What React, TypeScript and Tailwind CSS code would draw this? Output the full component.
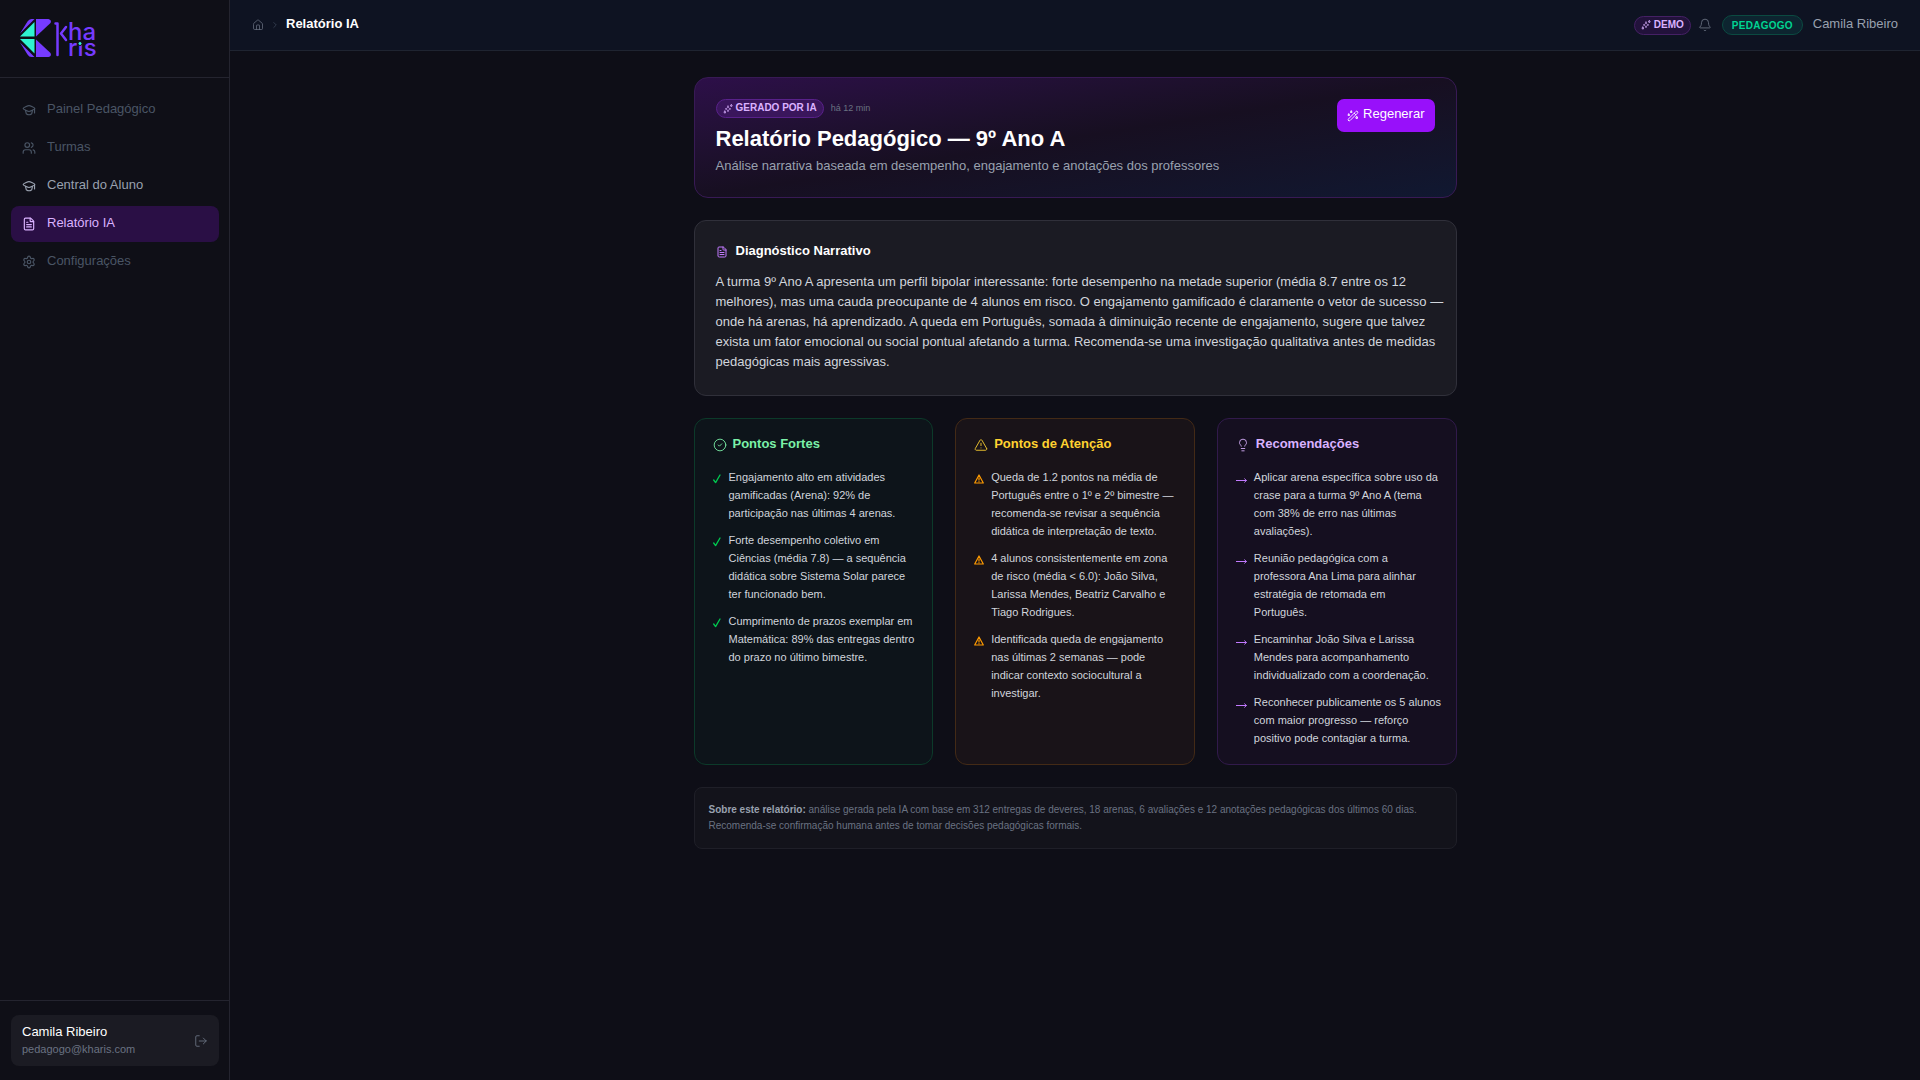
import type { ReactNode } from 'react';
import { Bell, ChevronRight, CircleCheck, FileText, House, Lightbulb, LogOut, Settings, TriangleAlert, Users } from 'lucide-react';
import clsx from 'clsx';

type IconProps = { className?: string };

const navItems = [
  { label: 'Painel Pedagógico', icon: GraduationIcon, state: 'muted' },
  { label: 'Turmas', icon: Users, state: 'muted' },
  { label: 'Central do Aluno', icon: GraduationIcon, state: 'normal' },
  { label: 'Relatório IA', icon: FileText, state: 'active' },
  { label: 'Configurações', icon: Settings, state: 'muted' },
];

const strengths = [
  'Engajamento alto em atividades gamificadas (Arena): 92% de participação nas últimas 4 arenas.',
  'Forte desempenho coletivo em Ciências (média 7.8) — a sequência didática sobre Sistema Solar parece ter funcionado bem.',
  'Cumprimento de prazos exemplar em Matemática: 89% das entregas dentro do prazo no último bimestre.',
];

const warnings = [
  'Queda de 1.2 pontos na média de Português entre o 1º e 2º bimestre — recomenda-se revisar a sequência didática de interpretação de texto.',
  '4 alunos consistentemente em zona de risco (média < 6.0): João Silva, Larissa Mendes, Beatriz Carvalho e Tiago Rodrigues.',
  'Identificada queda de engajamento nas últimas 2 semanas — pode indicar contexto sociocultural a investigar.',
];

const recommendations = [
  'Aplicar arena específica sobre uso da crase para a turma 9º Ano A (tema com 38% de erro nas últimas avaliações).',
  'Reunião pedagógica com a professora Ana Lima para alinhar estratégia de retomada em Português.',
  'Encaminhar João Silva e Larissa Mendes para acompanhamento individualizado com a coordenação.',
  'Reconhecer publicamente os 5 alunos com maior progresso — reforço positivo pode contagiar a turma.',
];

function GraduationIcon({ className }: IconProps) {
  return (
    <svg viewBox="0 0 24 24" fill="none" stroke="currentColor" strokeWidth="2" strokeLinecap="round" strokeLinejoin="round" className={className} aria-hidden="true">
      <path d="M2 9.500C2 8.200 10.100 4.500 12 4.500s10 3.700 10 5-8.100 5-10 5-10-3.700-10-5Z" />
      <path d="m6 12.500 1.200 5.100c.1.500.3.900.7 1.100 2.400 1.700 5.900 1.700 8.200 0 .4-.2.6-.6.7-1.100l1.200-5.100" />
      <path d="M21.500 10v7" />
    </svg>
  );
}

function SparklesIcon({ className }: IconProps) {
  return (
    <svg viewBox="0 0 24 24" fill="none" stroke="currentColor" strokeWidth="1.75" strokeLinecap="round" strokeLinejoin="round" className={className} aria-hidden="true">
      <path d="m12 5 1.300 3.500c.5 1.300.7 1.500 2 2l3.200 1.300-3.200 1.200c-1.300.5-1.500.7-2 2L12 18.500 10.700 15c-.5-1.300-.7-1.500-2-2l-3.200-1.200 3.200-1.300c1.300-.5 1.500-.7 2-2L12 5Z" />
      <path d="m20 1.500.6 1.900 1.900.6-1.900.6-.6 1.900-.6-1.900-1.900-.6 1.900-.6.6-1.900Z" />
      <path d="m4.500 17 .7 2 2 .7-2 .7-.7 2-.7-2-2-.7 2-.7.7-2Z" />
    </svg>
  );
}

function WandIcon({ className }: IconProps) {
  return (
    <svg viewBox="0 0 24 24" fill="none" stroke="currentColor" strokeWidth="1.75" strokeLinecap="round" strokeLinejoin="round" className={className} aria-hidden="true">
      <path d="M3 21c-.9-.9-.9-2.300 0-3.200L17.800 3c.9-.9 2.300-.9 3.200 0s.9 2.300 0 3.200L6.200 21c-.9.9-2.300.9-3.200 0Z" />
      <path d="m14.500 6.500 3 3" />
      <path d="m8.500 2 .6 1.500 1.400.5-1.400.6L8.500 6 8 4.600 6.500 4 8 3.500 8.500 2ZM3.500 8l.5 1.500 1.500.5-1.500.6-.5 1.400-.5-1.400L1.500 10l1.500-.5L3.500 8ZM19.500 13l.6 1.900 1.900.6-1.900.7-.6 1.800-.7-1.800-1.800-.7 1.800-.6.7-1.900Z" />
    </svg>
  );
}

function CheckMarker() {
  return (
    <svg width="9" height="10" viewBox="0 0 9 10" fill="none" stroke="currentColor" strokeWidth="1.3" strokeLinecap="round" strokeLinejoin="round" aria-hidden="true">
      <path d="M.7 6 2.600 8.600 7 1" />
    </svg>
  );
}

function WarningMarker() {
  return (
    <svg width="10" height="10" viewBox="0 0 10 10" fill="none" stroke="currentColor" strokeWidth="1.200" strokeLinejoin="round" aria-hidden="true">
      <path d="M5 1 9.300 9H.7L5 1Z" />
      <path d="M5 3.500v3M5 7.300v1" />
    </svg>
  );
}

function ArrowMarker() {
  return (
    <svg width="11" height="10" viewBox="0 0 11 10" fill="none" stroke="currentColor" aria-hidden="true">
      <path d="M0 6.500h10.500" />
      <path d="M8.300 4.500 10.500 6.500 8.300 8.500" strokeWidth=".9" />
    </svg>
  );
}

function Logo() {
  return (
    <svg width="79" height="38" viewBox="0 0 79 38" role="img" aria-label="Kharis" className="overflow-visible">
      <g fill="#763bff">
        <path d="M1 14.500 8.500 2.500Q10 0 12.500 0H15.500Z" />
        <path d="M1 23.500 8.500 35.500Q10 38 12.500 38H15.500Z" />
        <path d="M17 0H29.500Q33 1 31.500 4L17 17.500Z" />
        <path d="M17 20.500 31.500 34Q33 37 29.500 38H17Z" />
      </g>
      <g fill="#2ff3d0">
        <path d="M1 17.500 15.500 3V17.500Z" />
        <path d="M1 20H15.500V34.500Z" />
      </g>
      {/* Tall stem and arm of the "k" */}
      <path d="M36.500 4.500H38.500V36M47 8 42 14.500 47 21" fill="none" stroke="#763bff" strokeWidth="2.500" strokeLinecap="round" strokeLinejoin="round" />
      <g fill="#763bff" fontFamily="Inter, sans-serif" fontSize="24" fontWeight="500">
        <text x="49" y="21">ha</text>
        <text x="49" y="37">rıs</text>
      </g>
      <circle cx="61" cy="24.500" r="2" fill="#2ff3d0" stroke="#0f0f17" />
    </svg>
  );
}

function Sidebar() {
  return (
    <aside className="w-[230px] shrink-0 flex flex-col border-r border-[#24242f] bg-[#0f0f17]">
      <div className="px-[19px] pt-[19px] pb-5 border-b border-[#24242f]">
        <Logo />
      </div>
      <nav className="flex-1 pl-[11px] pr-2.5 py-[14px] space-y-0.5">
        {navItems.map(({ label, icon: Icon, state }) => (
          <a
            key={label}
            href="#"
            className={clsx(
              'flex items-center gap-[11px] h-9 px-[11px] rounded-lg text-[13px]',
              state === 'muted' && 'text-[#4a5565]',
              state === 'normal' && 'text-[#99a1af]',
              state === 'active' && 'bg-[#2a0f45] text-[#dab2ff]'
            )}
          >
            <Icon className="size-[14px]" />
            <span className="pb-0.5">{label}</span>
          </a>
        ))}
      </nav>
      <div className="pl-[11px] pr-2.5 py-[14px] border-t border-[#24242f]">
        <div className="flex items-center justify-between px-[11px] py-2 rounded-lg bg-[#1b1b23]">
          <div>
            <p className="text-[13px] leading-[18px] font-medium text-white">Camila Ribeiro</p>
            <p className="text-[11px] leading-[17px] text-[#6a7282]">pedagogo@kharis.com</p>
          </div>
          <button type="button" aria-label="Sair" className="text-[#6a7282]">
            <LogOut className="size-[14px]" strokeWidth={1.5} />
          </button>
        </div>
      </div>
    </aside>
  );
}

function Header() {
  return (
    <header className="flex items-center justify-between h-[51px] px-[22px] border-b border-[#1f2431] bg-[#0e1322] text-[13px]">
      <div className="flex items-center gap-1.5">
        <a href="#" aria-label="Início" className="text-[#6a7282]">
          <House className="size-3" strokeWidth={1.5} />
        </a>
        <ChevronRight className="size-[10px] text-[#364153]" />
        <span className="pb-0.5 font-semibold text-white">Relatório IA</span>
      </div>
      <div className="flex items-center">
        <span className="flex items-center gap-[3px] h-[19px] px-1.5 rounded-full border border-[#452065] bg-[#22123b] text-[10px] font-bold text-[#dab2ff]">
          <SparklesIcon className="size-[10px]" />
          <span className="pb-0.5">DEMO</span>
        </span>
        <button type="button" aria-label="Notificações" className="ml-[7px] text-[#6a7282]">
          <Bell className="size-[14px]" strokeWidth={1.5} />
        </button>
        <span className="flex items-center h-5 ml-[10px] px-[9px] rounded-full border border-[#0b4a41] bg-[#0d2530] text-[10px] font-bold tracking-wide text-[#00d492]">
          PEDAGOGO
        </span>
        <span className="ml-[10px] pb-0.5 text-[#99a1af]">Camila Ribeiro</span>
      </div>
    </header>
  );
}

type InsightCardProps = {
  title: string;
  icon: ReactNode;
  marker: ReactNode;
  items: string[];
  cardClass: string;
  titleClass: string;
  markerClass: string;
};

function InsightCard({ title, icon, marker, items, cardClass, titleClass, markerClass }: InsightCardProps) {
  return (
    <section className={clsx('rounded-xl border pl-[18px] pr-[14px] pt-4 pb-[17px]', cardClass)}>
      <h3 className={clsx('flex items-center gap-[6px] mb-[15px] text-[13px] leading-[18px] font-semibold', titleClass)}>
        {icon}
        {title}
      </h3>
      <ul className="space-y-[9px] text-[11px] leading-[18px] text-[#d1d5dc]">
        {items.map((item) => (
          <li key={item} className="flex gap-[7px]">
            <span className={clsx('pt-1.5 shrink-0', markerClass)}>{marker}</span>
            <span>{item}</span>
          </li>
        ))}
      </ul>
    </section>
  );
}

export default function App() {
  return (
    <div className="min-h-screen flex bg-[#0e0e17] font-['Liberation_Sans',Arial,sans-serif] text-white">
      <Sidebar />
      <div className="flex-1 min-w-0 flex flex-col">
        <Header />
        <main className="w-full max-w-[807px] mx-auto px-[22px] py-[26px] space-y-[22px]">
          {/* Report heading */}
          <section className="flex items-start justify-between p-[21px] rounded-[14px] border border-[#381a55] bg-linear-to-br from-[#2d0f49] via-[#170f21] to-[#101831]">
            <div>
              <div className="flex items-center gap-[7px]">
                <span className="flex items-center gap-[3px] h-[19px] px-1.5 rounded-full border border-[#59218a] bg-[#3a165c] text-[10px] font-bold text-[#dab2ff]">
                  <SparklesIcon className="size-[10px]" />
                  <span className="pb-0.5">GERADO POR IA</span>
                </span>
                <span className="text-[9px] text-[#6a7282]">há 12 min</span>
              </div>
              <h1 className="mt-[7px] text-[22px] leading-7 font-bold">Relatório Pedagógico — 9º Ano A</h1>
              <p className="mt-1 mb-px text-[13px] leading-[18px] text-[#99a1af]">
                Análise narrativa baseada em desempenho, engajamento e anotações dos professores
              </p>
            </div>
            <button type="button" className="flex items-center gap-1 h-[33px] px-[10px] rounded-[7px] bg-[#9810fa] text-[13px] font-medium">
              <WandIcon className="size-3" />
              <span className="pb-[3px]">Regenerar</span>
            </button>
          </section>

          {/* Narrative */}
          <section className="py-[21px] pl-[21px] pr-[10px] rounded-xl border border-[#30303a] bg-[#1b1b23]">
            <h2 className="flex items-center gap-2 mb-3 text-[13px] leading-[18px] font-semibold">
              <FileText className="size-3 mt-0.5 text-[#c27aff]" />
              Diagnóstico Narrativo
            </h2>
            <p className="mb-0.5 text-[13px] leading-5 text-[#d1d5dc]">
              A turma 9º Ano A apresenta um perfil bipolar interessante: forte desempenho na metade superior (média 8.7 entre os 12
              melhores), mas uma cauda preocupante de 4 alunos em risco. O engajamento gamificado é claramente o vetor de sucesso —
              onde há arenas, há aprendizado. A queda em Português, somada à diminuição recente de engajamento, sugere que talvez
              exista um fator emocional ou social pontual afetando a turma. Recomenda-se uma investigação qualitativa antes de medidas
              pedagógicas mais agressivas.
            </p>
          </section>

          {/* Insights */}
          <div className="grid grid-cols-1 md:grid-cols-3 gap-[22px]">
            <InsightCard
              title="Pontos Fortes"
              icon={<CircleCheck className="size-[14px] mt-0.5" strokeWidth={1.5} />}
              marker={<CheckMarker />}
              items={strengths}
              cardClass="border-[#0c3a2a] bg-[#0d141a]"
              titleClass="text-[#7bf1a8]"
              markerClass="text-[#00c950]"
            />
            <InsightCard
              title="Pontos de Atenção"
              icon={<TriangleAlert className="size-[14px] mt-0.5" strokeWidth={1.5} />}
              marker={<WarningMarker />}
              items={warnings}
              cardClass="border-[#432a16] bg-[#191318]"
              titleClass="text-[#ffd230]"
              markerClass="text-[#fe9a00]"
            />
            <InsightCard
              title="Recomendações"
              icon={<Lightbulb className="size-[14px] mt-0.5" strokeWidth={1.5} />}
              marker={<ArrowMarker />}
              items={recommendations}
              cardClass="border-[#311a4b] bg-[#150f20]"
              titleClass="text-[#dab2ff]"
              markerClass="text-[#c27aff]"
            />
          </div>

          {/* Disclaimer */}
          <footer className="p-[14px] rounded-lg border border-[#1f1f28] bg-[#13131b] text-[10px] leading-4 text-[#6a7282]">
            <strong className="text-[#99a1af]">Sobre este relatório:</strong> análise gerada pela IA com base em 312 entregas de deveres,
            18 arenas, 6 avaliações e 12 anotações pedagógicas dos últimos 60 dias. Recomenda-se confirmação humana antes de tomar
            decisões pedagógicas formais.
          </footer>
        </main>
      </div>
    </div>
  );
}
